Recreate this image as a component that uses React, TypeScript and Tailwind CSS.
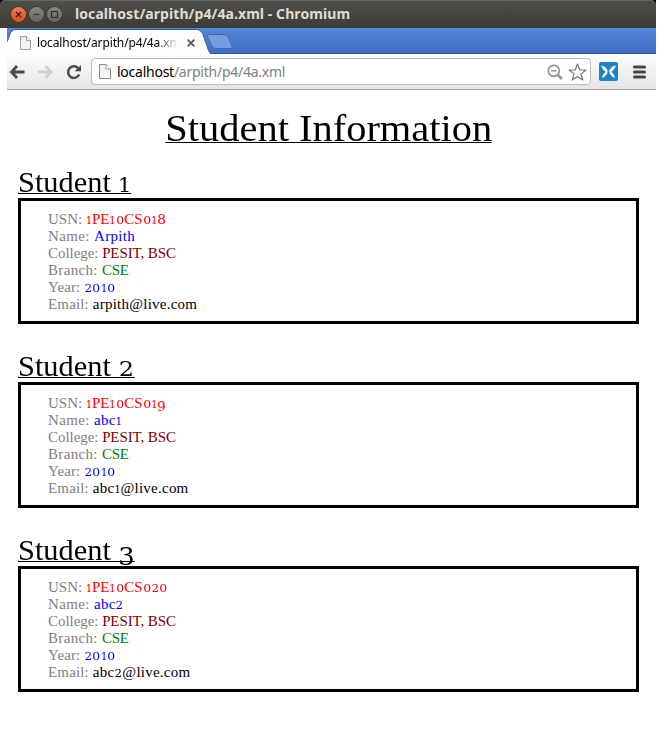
import React from "react";

const digitStyles: Record<string, string> = {
  "0": "w-[0.585em] [&>span]:text-[0.69em] [&>span]:scale-x-120",
  "1": "w-[0.41em] [&>span]:text-[0.69em]",
  "2": "w-[0.535em] [&>span]:text-[0.69em] [&>span]:scale-x-115",
  "3": "w-[0.53em] [&>span]:text-[0.85em] [&>span]:translate-y-[0.2em]",
  "8": "w-[0.57em] [&>span]:text-[0.92em]",
  "9": "w-[0.54em] [&>span]:text-[0.87em] [&>span]:translate-y-[0.2em]",
};

/** Sets figures in old-style proportions next to the serif letters. */
function OldStyle({ text }: { text: string }) {
  return (
    <>
      {text.split(/(\d)/).map((part, i) =>
        digitStyles[part] ? (
          <span
            key={i}
            className={`inline-flex items-baseline justify-center leading-none tracking-normal font-['DejaVu_Serif',serif] ${digitStyles[part]}`}
          >
            <span className="block">{part}</span>
          </span>
        ) : (
          part
        ),
      )}
    </>
  );
}

interface Student {
  usn: string;
  name: string;
  email: string;
}

const students: Student[] = [
  { usn: "1PE10CS018", name: "Arpith", email: "arpith@live.com" },
  { usn: "1PE10CS019", name: "abc1", email: "abc1@live.com" },
  { usn: "1PE10CS020", name: "abc2", email: "abc2@live.com" },
];

interface FieldProps {
  label: string;
  labelClass: string;
  value: string;
  valueClass: string;
}

function Field({ label, labelClass, value, valueClass }: FieldProps) {
  return (
    <div className="h-[17px] whitespace-pre">
      <span className={`text-[#808080] ${labelClass}`}>{label + ": "}</span>
      <span className={valueClass}>
        <OldStyle text={value} />
      </span>
    </div>
  );
}

function StudentCard({ student, index }: { student: Student; index: number }) {
  return (
    <section className="mb-[26px] h-[158px]">
      <h2 className="flex h-8">
        <span className="h-[28px] origin-left scale-x-107 border-b border-black text-[28.4px] leading-[33px] whitespace-pre">
          <OldStyle text={`Student ${index}`} />
        </span>
      </h2>
      <div className="h-[126px] border-[3px] border-black pt-[10px] pl-[27px] text-[15px] leading-[17px]">
        <Field label="USN" labelClass="" value={student.usn} valueClass="text-[#ff0000] tracking-[-0.1px]" />
        <Field label="Name" labelClass="tracking-[0.38px]" value={student.name} valueClass="text-[#0000ff] tracking-[0.3px]" />
        <Field label="College" labelClass="tracking-[-0.05px]" value="PESIT, BSC" valueClass="text-[#800000] tracking-[-0.1px]" />
        <Field label="Branch" labelClass="tracking-[0.34px]" value="CSE" valueClass="text-[#008000] tracking-[-0.3px]" />
        <Field label="Year" labelClass="tracking-[0.1px]" value="2010" valueClass="text-[#0000ff]" />
        <Field label="Email" labelClass="tracking-[0.15px]" value={student.email} valueClass="text-black tracking-[0.24px]" />
      </div>
    </section>
  );
}

function PageIcon({ className }: { className: string }) {
  return (
    <svg className={className} width="12" height="15" viewBox="0 0 12 15" fill="#f4f4f4" stroke="#8e8e8e">
      <path d="M.5 .5H7L11.500 5V14.500H.5Z" />
      <path d="M7 .5V5H11.500" fill="#fff" />
    </svg>
  );
}

function WindowButton({ close, children }: { close?: boolean; children: React.ReactNode }) {
  return (
    <span
      className={`flex size-[15px] items-center justify-center rounded-full ${
        close ? "bg-linear-to-b from-[#f37c55] to-[#dd4716]" : "bg-linear-to-b from-[#8a8880] to-[#65635c]"
      } shadow-[0_0_0_0.5px_#2e2c28]`}
    >
      <svg width="9" height="9" viewBox="0 0 9 9" fill="none" stroke={close ? "#44180b" : "#35332e"} strokeWidth="1.2">
        {children}
      </svg>
    </span>
  );
}

function TitleBar() {
  return (
    <div className="h-7 bg-black">
      <div className="flex h-7 items-center rounded-t-[5px] border-t border-[#656460] bg-linear-to-b from-[#504f4a] to-[#3c3b37] pl-[11px]">
        <div className="flex gap-[3px]">
          <WindowButton close>
            <path d="M2 2L7 7M7 2L2 7" />
          </WindowButton>
          <WindowButton>
            <path d="M1.500 4.500H7.500" />
          </WindowButton>
          <WindowButton>
            <rect x="1.500" y="1.500" width="6" height="6" />
          </WindowButton>
        </div>
        <span className="-mt-px ml-[13px] whitespace-pre font-['Noto_Sans',sans-serif] text-[14px] leading-[18px] font-bold tracking-[0.08px] text-[#dfdbd2]">
          localhost/arpith/p4/4a.xml - Chromium
        </span>
      </div>
    </div>
  );
}

function TabStrip() {
  return (
    <div className="flex h-[26px] bg-linear-to-b from-[#5486d8] to-[#3d6cc6] shadow-[inset_0_-1px_0_#31549b]">
      <div className="relative flex h-[26px] w-[202px] items-center pl-[13px]">
        <svg className="absolute top-0 left-0" width="204" height="26" viewBox="0 0 204 26">
          <path
            d="M0 26V14C2 10 3 2 8 1.500H189C193 1.500 195 4 196.500 8L201 21C202 24 203 25.500 204 26Z"
            fill="#fdfdfd"
          />
          <path
            d="M0 14C2 10 3 2 8 1.500H189C193 1.500 195 4 196.500 8L201 21C202 24 203 25 204 25.500"
            fill="none"
            stroke="#345ca6"
            strokeWidth="1"
          />
        </svg>
        <PageIcon className="relative mt-[4px] h-[14px] w-[11px]" />
        <span className="relative mt-[3px] ml-[6px] w-[141px] overflow-hidden bg-linear-to-r from-black from-85% to-transparent bg-clip-text font-['Noto_Sans',sans-serif] text-[12px] leading-[18px] tracking-[-0.12px] whitespace-pre text-transparent">
          localhost/arpith/p4/4a.xml
        </span>
        <svg className="relative mt-[3px] ml-[9px] shrink-0" width="8" height="8" viewBox="0 0 8 8" stroke="#555" strokeWidth="1.800">
          <path d="M.7 .7L7.300 7.300M7.300 .7L.7 7.300" />
        </svg>
      </div>
      <svg className="mt-[5px] ml-[-3px]" width="27" height="17" viewBox="0 0 27 17">
        <path
          d="M3 1.500H18C20.500 1.500 21.500 3 22.500 5L26 13C26.500 15 26 15.500 24 15.500H10C7.500 15.500 6.500 14 5.500 12L1.500 4C1 2.500 1.500 1.500 3 1.500Z"
          fill="#759bdc"
          stroke="#4068b6"
        />
      </svg>
    </div>
  );
}

function Toolbar() {
  return (
    <div className="flex h-9 items-center border-b border-[#a5a5a5] bg-linear-to-b from-[#fdfdfd] to-[#e4e4e4]">
      <svg className="ml-[2px]" width="16" height="14" viewBox="0 0 16 14" fill="none" stroke="#4a4a4a" strokeWidth="2.800">
        <path d="M8 1L2.500 7L8 13M2.500 7H15.500" />
      </svg>
      <svg className="ml-[13px]" width="16" height="14" viewBox="0 0 16 14" fill="none" stroke="#d0d0d0" strokeWidth="2.800">
        <path d="M7.500 1L13 7L7.500 13M13 7H0" />
      </svg>
      <svg className="ml-[12px]" width="16" height="16" viewBox="0 0 16 16" fill="none">
        <path d="M13.200 10.500A5.800 5.800 0 1 1 12 4" stroke="#4a4a4a" strokeWidth="2.500" />
        <path d="M15 1V7.300H8.700Z" fill="#4a4a4a" />
      </svg>
      <div className="ml-[9px] flex h-[27px] w-[500px] items-center rounded-[4px] border border-[#bcbcbc] bg-white pl-[7px]">
        <PageIcon className="" />
        <span className="ml-[6px] grow font-['Noto_Sans',sans-serif] text-[14px] leading-[20px] tracking-[-0.25px] text-[#808080]">
          <span className="text-black">localhost</span>/arpith/p4/4a.xml
        </span>
        <svg width="16" height="16" viewBox="0 0 16 16" fill="none" stroke="#929292">
          <circle cx="6.800" cy="6.800" r="5.500" strokeWidth="1.700" />
          <path d="M4 6.800H9.600" strokeWidth="1.500" />
          <path d="M10.800 10.800L15 15" strokeWidth="2.500" />
        </svg>
        <svg className="mr-[3px] ml-[5px]" width="19" height="18" viewBox="0 0 19 18" fill="#fff" stroke="#777" strokeWidth="1.200" strokeLinejoin="round">
          <path d="M9.500 1L11.700 6.800L18 7L13 10.900L14.800 17L9.500 13.500L4.200 17L6 10.900L1 7L7.300 6.800Z" />
        </svg>
      </div>
      <svg className="ml-2" width="19" height="19" viewBox="0 0 19 19">
        <rect width="19" height="19" rx="2" fill="#1f80c4" />
        <path
          d="M2 3.500C5.500 4 8.500 6.500 8.700 9.500C8.500 12 6.500 14.500 3.200 16C3.500 13 4.500 11 7 10C5.500 9.500 3.500 7 2 3.500ZM17 3.500C13.500 4 10.500 6.500 10.300 9.500C10.500 12 12.500 14.500 15.800 16C15.500 13 14.500 11 12 10C13.500 9.500 15.500 7 17 3.500Z"
          fill="#fff"
        />
      </svg>
      <svg className="ml-[15px]" width="13" height="14" viewBox="0 0 13 14" stroke="#444" strokeWidth="3" strokeLinecap="round">
        <path d="M1.500 2H11.500M1.500 7H11.500M1.500 12H11.500" />
      </svg>
    </div>
  );
}

export default function App() {
  return (
    <div className="h-[744px] w-[657px] overflow-hidden bg-white font-['Liberation_Serif',serif] text-black">
      <div className="w-[656px]">
        <TitleBar />
        <div className="pl-[7px]">
          <TabStrip />
          <Toolbar />
        </div>
      </div>
      <main className="px-[18px] pt-[15px]">
        <header className="flex h-[61px] justify-center">
          <h1 className="h-[38px] scale-x-107 border-b border-black text-[37.8px] leading-[46px] whitespace-pre">
            Student Information
          </h1>
        </header>
        {students.map((student, i) => (
          <StudentCard key={student.usn} student={student} index={i + 1} />
        ))}
      </main>
    </div>
  );
}
